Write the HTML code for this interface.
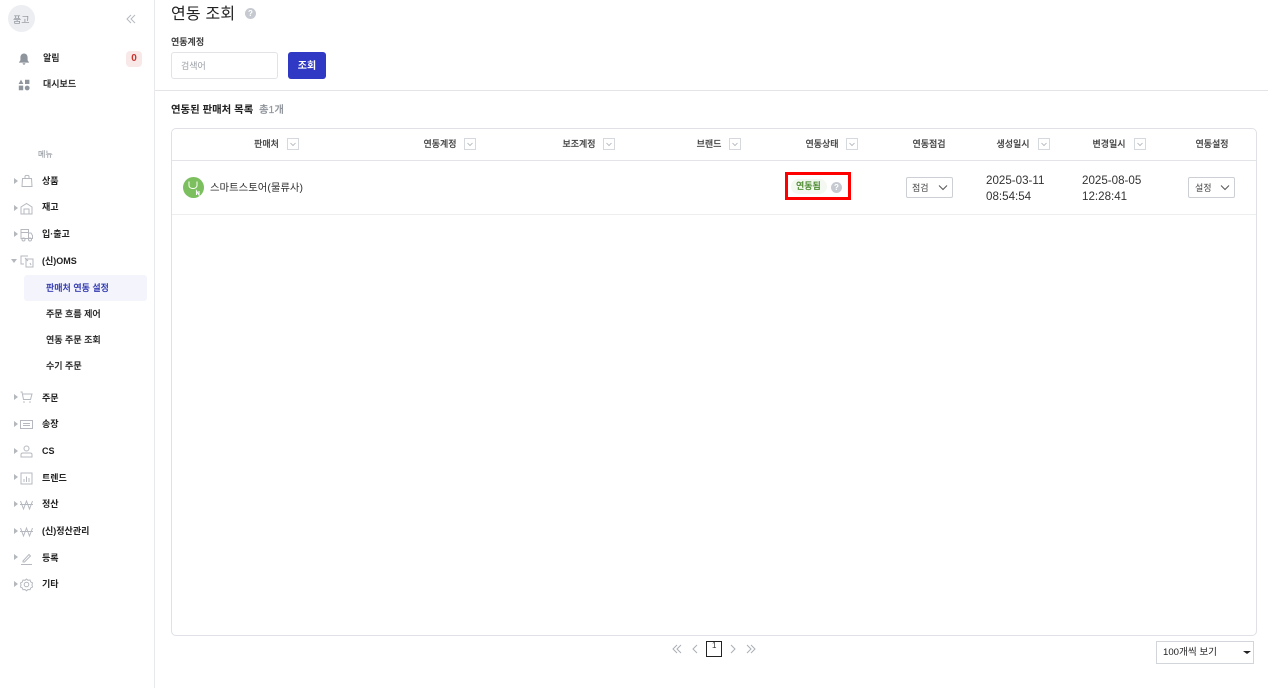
<!DOCTYPE html>
<html lang="ko"><head><meta charset="utf-8"><title>연동 조회</title>
<style>
html,body{margin:0;padding:0;width:1268px;height:688px;overflow:hidden;background:#fff}
body{position:relative;font-family:"Liberation Sans","Noto Sans CJK KR",sans-serif;color:#222;font-size:9px}
.t{position:absolute;white-space:nowrap;line-height:14px;height:14px;margin-top:2px}
.b{font-weight:700}
.m{font-weight:500;-webkit-text-stroke:.15px currentColor}
.box{position:absolute;box-sizing:border-box}
svg{position:absolute;overflow:visible}
.ic{fill:none;stroke:#b5b9bf;stroke-width:1}
.tri{width:0;height:0;position:absolute;border-left:4px solid #b4b8bd;border-top:3.5px solid transparent;border-bottom:3.5px solid transparent}
.fb{position:absolute;box-sizing:border-box;width:12px;height:12px;border:1px solid #d5d8dd;background:#fff}
.h{color:#444;font-weight:500;-webkit-text-stroke:.15px currentColor;transform:translateX(-50%)}
.q{position:absolute;width:11px;height:11px;border-radius:50%;background:#c6cad0;color:#fff;font-size:8px;line-height:11px;text-align:center;font-weight:700}
.sel{position:absolute;box-sizing:border-box;height:21px;width:47px;border:1px solid #ccd0d5;border-radius:2px;background:#fff}
</style></head><body>

<!-- sidebar -->
<div class="box" style="left:154px;top:0;width:1px;height:688px;background:#e7e9ec"></div>
<div class="box" style="left:8px;top:5px;width:27px;height:27px;border-radius:50%;background:#eceef2"></div>
<span class="t" style="left:13px;top:11px;color:#8b9097;font-size:9px">품고</span>
<svg style="left:126px;top:14px" width="10" height="10" viewBox="0 0 10 10"><path class="ic" d="M5 1 1 5l4 4M9 1 5 5l4 4"/></svg>

<svg style="left:18px;top:53px" width="12" height="12" viewBox="0 0 12 12"><path fill="#8f959d" d="M6 .5C3.600.5 2.400 2.400 2.400 4.600v2.600L.8 9.600h10.400L9.600 7.200V4.600C9.600 2.400 8.400.5 6 .5zM4.600 10.300h2.800C7.300 11.300 6.700 11.700 6 11.700s-1.300-.4-1.400-1.400z"/></svg>
<span class="t m" style="left:43px;top:49px">알림</span>
<div class="box" style="left:126px;top:51px;width:16px;height:16px;border-radius:4px;background:#f8e8e8;color:#c8352f;font-size:10px;font-weight:700;text-align:center;line-height:15px">0</div>

<svg style="left:18px;top:79px" width="12" height="12" viewBox="0 0 12 12"><path fill="#8f959d" d="M3 .6 5.400 5H.6zM7 .8h4.400v4.200H7zM.8 6.600h4.400v4.600H.8z"/><circle fill="#8f959d" cx="9.200" cy="9" r="2.400"/></svg>
<span class="t m" style="left:43px;top:75px">대시보드</span>

<span class="t" style="left:38px;top:146px;font-size:8px;color:#7e848c">메뉴</span>

<!-- menu arrows -->
<div class="tri" style="left:14px;top:178px"></div>
<div class="tri" style="left:14px;top:205px"></div>
<div class="tri" style="left:14px;top:231px"></div>
<div class="box" style="left:11px;top:259px;width:0;height:0;border-top:4px solid #b4b8bd;border-left:3.5px solid transparent;border-right:3.5px solid transparent"></div>
<div class="tri" style="left:14px;top:394px"></div>
<div class="tri" style="left:14px;top:421px"></div>
<div class="tri" style="left:14px;top:448px"></div>
<div class="tri" style="left:14px;top:474px"></div>
<div class="tri" style="left:14px;top:501px"></div>
<div class="tri" style="left:14px;top:528px"></div>
<div class="tri" style="left:14px;top:554px"></div>
<div class="tri" style="left:14px;top:581px"></div>

<!-- menu icons -->
<svg style="left:21px;top:174px" width="12" height="13" viewBox="0 0 12 13"><path class="ic" d="M1.500 4.500h9l.5 8H1zM4 4.500V2.500C4 1 8 1 8 2.500v2"/></svg>
<svg style="left:20px;top:202px" width="13" height="13" viewBox="0 0 13 13"><path class="ic" d="M1 12V5l5.500-3.500L12 5v7zM4 12V7h5v5"/></svg>
<svg style="left:20px;top:228px" width="13" height="14" viewBox="0 0 13 14"><path class="ic" d="M1 1.500h7.500v9H1zM8.500 5H11l1.500 2.500v3h-4M1 4.500h7.500"/><circle class="ic" cx="3.500" cy="11.500" r="1.500"/><circle class="ic" cx="10" cy="11.500" r="1.500"/></svg>
<svg style="left:20px;top:255px" width="14" height="13" viewBox="0 0 14 13"><path class="ic" d="M8 1H1v8h3M6 4h7v8H6zM5 3l3 3M10 8l1 2"/></svg>
<svg style="left:20px;top:391px" width="13" height="13" viewBox="0 0 13 13"><path class="ic" d="M.5 1H2l1.500 7.500h7L12 3H3"/><circle fill="#b5b9bf" cx="4" cy="11" r=".8"/><circle fill="#b5b9bf" cx="10" cy="11" r=".8"/></svg>
<svg style="left:20px;top:419px" width="13" height="11" viewBox="0 0 13 11"><path class="ic" d="M.5 1.500h12v8H.5zM3 4.500h7M3 6.500h7"/></svg>
<svg style="left:20px;top:445px" width="13" height="13" viewBox="0 0 13 13"><circle class="ic" cx="6.500" cy="3.500" r="2.500"/><path class="ic" d="M1 12V9.500C1 8.500 2 8 3 8h7c1 0 2 .5 2 1.500V12z"/></svg>
<svg style="left:20px;top:472px" width="13" height="13" viewBox="0 0 13 13"><path class="ic" d="M1 1h11v11H1zM4 10V7M6.500 10V4.500M9 10V6"/></svg>
<svg style="left:20px;top:500px" width="13" height="10" viewBox="0 0 13 10"><path class="ic" d="M.5 1 3.500 9 6.500 1 9.500 9 12.500 1M0 4.500h13"/></svg>
<svg style="left:20px;top:527px" width="13" height="10" viewBox="0 0 13 10"><path class="ic" d="M.5 1 3.500 9 6.500 1 9.500 9 12.500 1M0 4.500h13"/></svg>
<svg style="left:20px;top:552px" width="13" height="13" viewBox="0 0 13 13"><path class="ic" d="M3 9 9 2.500l1.500 1.500L4.500 10H3zM1 12.500h11"/></svg>
<svg style="left:20px;top:578px" width="13" height="13" viewBox="0 0 13 13"><circle class="ic" cx="6.500" cy="6.500" r="2.300"/><path class="ic" d="M6.500 1 8 2.300l2-.3.700 1.900 1.800 1L12 7l.5 2-1.800 1-.7 1.700-2-.2-1.500 1.300L5 11.500l-2 .2L2.300 10 .5 9 1 7 .5 5l1.800-1L3 2l2 .3z"/></svg>

<span class="t b" style="left:42px;top:172px">상품</span>
<span class="t b" style="left:42px;top:198px">재고</span>
<span class="t b" style="left:42px;top:225px">입·출고</span>
<span class="t b" style="left:42px;top:252px">(신)OMS</span>

<div class="box" style="left:24px;top:275px;width:123px;height:26px;border-radius:3px;background:#f4f5fc"></div>
<span class="t m" style="left:46px;top:279px;color:#3038b0">판매처 연동 설정</span>
<span class="t m" style="left:46px;top:305px">주문 흐름 제어</span>
<span class="t m" style="left:46px;top:331px">연동 주문 조회</span>
<span class="t m" style="left:46px;top:357px">수기 주문</span>

<span class="t b" style="left:42px;top:389px">주문</span>
<span class="t b" style="left:42px;top:415px">송장</span>
<span class="t b" style="left:42px;top:442px">CS</span>
<span class="t b" style="left:42px;top:469px">트렌드</span>
<span class="t b" style="left:42px;top:495px">정산</span>
<span class="t b" style="left:42px;top:522px">(신)정산관리</span>
<span class="t b" style="left:42px;top:549px">등록</span>
<span class="t b" style="left:42px;top:575px">기타</span>

<!-- header -->
<span class="t" style="left:171px;top:3px;font-size:16px;line-height:20px;height:20px;letter-spacing:.2px">연동 조회</span>
<div class="q" style="left:245px;top:8px">?</div>
<span class="t m" style="left:171px;top:33px;color:#333">연동계정</span>
<div class="box" style="left:171px;top:52px;width:107px;height:27px;border:1px solid #e1e3e7;border-radius:3px"></div>
<span class="t" style="left:181px;top:57px;color:#9a9fa6">검색어</span>
<div class="box" style="left:288px;top:52px;width:38px;height:27px;border-radius:3px;background:#3039c4;color:#fff;font-weight:700;text-align:center;line-height:30px;font-size:10px">조회</div>
<div class="box" style="left:155px;top:90px;width:1113px;height:1px;background:#e2e4e8"></div>

<span class="t b" style="left:171px;top:102px;font-size:10.400px">연동된 판매처 목록</span>
<span class="t m" style="left:259px;top:102px;color:#8e939a;font-size:10.400px">총1개</span>

<!-- table -->
<div class="box" style="left:171px;top:128px;width:1086px;height:508px;border:1px solid #dfe1e6;border-radius:5px"></div>
<div class="box" style="left:172px;top:160px;width:1084px;height:1px;background:#e2e4e8"></div>
<div class="box" style="left:172px;top:214px;width:1084px;height:1px;background:#eceef0"></div>

<span class="t h" style="left:266.500px;top:135px">판매처</span>
<span class="t h" style="left:440px;top:135px">연동계정</span>
<span class="t h" style="left:579px;top:135px">보조계정</span>
<span class="t h" style="left:709px;top:135px">브랜드</span>
<span class="t h" style="left:822px;top:135px">연동상태</span>
<span class="t h" style="left:929px;top:135px">연동점검</span>
<span class="t h" style="left:1013px;top:135px">생성일시</span>
<span class="t h" style="left:1109px;top:135px">변경일시</span>
<span class="t h" style="left:1212px;top:135px">연동설정</span>

<div class="fb" style="left:287px;top:138px"></div><div class="fb" style="left:464px;top:138px"></div><div class="fb" style="left:603px;top:138px"></div><div class="fb" style="left:729px;top:138px"></div><div class="fb" style="left:846px;top:138px"></div><div class="fb" style="left:1038px;top:138px"></div><div class="fb" style="left:1134px;top:138px"></div>
<svg style="left:0;top:0" width="1268" height="200"><path fill="none" stroke="#aab0b6" stroke-width=".8" d="M290.500 143l2.500 2.500 2.500-2.500M467.500 143l2.500 2.500 2.500-2.500M606.500 143l2.500 2.500 2.500-2.500M732.500 143l2.500 2.500 2.500-2.500M849.500 143l2.500 2.500 2.500-2.500M1041.500 143l2.500 2.500 2.500-2.500M1137.500 143l2.500 2.500 2.500-2.500"/></svg>

<!-- row -->
<svg style="left:183px;top:177px" width="21" height="21" viewBox="0 0 21 21"><circle cx="10.500" cy="10.500" r="10.500" fill="#7cbf5e"/><path d="M6 4.500v4c0 4 8 4 8 0v-4" fill="none" stroke="#fff" stroke-width="1"/><path d="M13.500 18v-4l2.500 4v-4" fill="none" stroke="#fff" stroke-width="1.100"/></svg>
<span class="t" style="left:210px;top:180px;font-size:10.400px;color:#333">스마트스토어(물류사)</span>

<div class="box" style="left:785px;top:172px;width:66px;height:28px;border:3.500px solid #ff0000;background:#fff"></div>
<div class="box" style="left:791px;top:179px;width:36px;height:15px;border-radius:8px;background:#f3f8f0"></div>
<span class="t m" style="left:796px;top:177px;color:#4c8a2e">연동됨</span>
<div class="q" style="left:831px;top:182px">?</div>

<div class="sel" style="left:906px;top:177px"></div>
<span class="t" style="left:912px;top:179px;color:#444">점검</span>
<svg style="left:938px;top:185px" width="10" height="6"><path d="M1 .5l4 4 4-4" fill="none" stroke="#555" stroke-width="1"/></svg>

<span class="t" style="left:986px;top:171px;font-size:11.600px;color:#333;line-height:16px;height:16px">2025-03-11</span>
<span class="t" style="left:986px;top:187px;font-size:11.600px;color:#333;line-height:16px;height:16px">08:54:54</span>
<span class="t" style="left:1082px;top:171px;font-size:11.600px;color:#333;line-height:16px;height:16px">2025-08-05</span>
<span class="t" style="left:1082px;top:187px;font-size:11.600px;color:#333;line-height:16px;height:16px">12:28:41</span>

<div class="sel" style="left:1188px;top:177px"></div>
<span class="t" style="left:1195px;top:179px;color:#444">설정</span>
<svg style="left:1220px;top:185px" width="10" height="6"><path d="M1 .5l4 4 4-4" fill="none" stroke="#555" stroke-width="1"/></svg>

<!-- pagination -->
<svg style="left:672px;top:644px" width="85" height="10"><path fill="none" stroke="#a9afb6" stroke-width="1" d="M5 1 1 5l4 4M9 1 5 5l4 4M25 1l-4 4 4 4M59 1l4 4-4 4M79 1l4 4-4 4M75 1l4 4-4 4"/></svg>
<div class="box" style="left:706px;top:641px;width:16px;height:16px;border:1px solid #222"></div>
<span class="t" style="left:712px;top:638px;font-size:8px;line-height:12px;color:#333">1</span>

<div class="box" style="left:1156px;top:641px;width:98px;height:23px;border:1px solid #d2d5d9"></div>
<span class="t" style="left:1163px;top:644px;color:#222;font-size:9.600px">100개씩 보기</span>
<div class="box" style="left:1243px;top:651px;width:0;height:0;border-top:3.500px solid #222;border-left:4px solid transparent;border-right:4px solid transparent"></div>
</body></html>
